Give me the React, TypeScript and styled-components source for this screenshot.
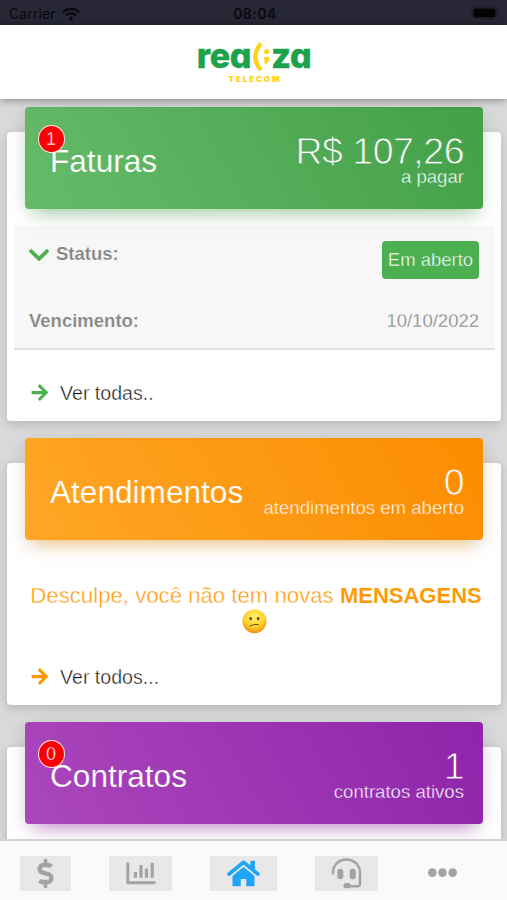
import React from "react";
import styled, { createGlobalStyle } from "styled-components";
import { FaDollarSign, FaHome, FaWifi } from "react-icons/fa";

const GlobalStyle = createGlobalStyle`
  * { box-sizing: border-box; }
  body {
    margin: 0;
    background: #d9d9d9;
    font-family: "Liberation Sans", Arial, sans-serif;
    overflow: hidden;
  }
`;

const Screen = styled.div`
  height: 900px;
  display: flex;
  flex-direction: column;
  overflow: hidden;
  background: #d9d9d9;
`;

const StatusBar = styled.div`
  flex: none;
  height: 25px;
  display: grid;
  grid-template-columns: 1fr auto 1fr;
  align-items: center;
  padding: 3px 6px 0 9px;
  background: #272736;
  color: #090a10;
  font: 400 14px/20px Inter, sans-serif;
`;

const Carrier = styled.div`
  display: flex;
  align-items: center;
  gap: 6px;
  letter-spacing: 0.1px;
`;

const Clock = styled.div`
  font-weight: 600;
  letter-spacing: 0.5px;
`;

const Battery = styled.div`
  justify-self: end;
  display: flex;
  margin-top: -3px;
`;

const Header = styled.header`
  flex: none;
  position: relative;
  z-index: 2;
  height: 74px;
  display: flex;
  flex-direction: column;
  align-items: center;
  background: #fff;
  box-shadow: 0 1px 8px rgba(0, 0, 0, 0.4);
`;

const Wordmark = styled.div`
  display: flex;
  height: 48px;
  padding: 12px 0 0 1px;
  color: #1ba24b;
  font: 800 34px/38px Inter, sans-serif;
  font-feature-settings: "cv11" 1;
  letter-spacing: -0.3px;
  -webkit-text-stroke: 0.4px #1ba24b;
`;

const Tagline = styled.div`
  margin-left: 3px;
  color: #ffd417;
  font: 900 8px/12px Inter, sans-serif;
  letter-spacing: 1.9px;
  -webkit-text-stroke: 0.1px #ffd417;
`;

const Mark = styled.svg`
  flex: none;
  margin: 4px 1px 0 1px;
`;

const Content = styled.main`
  flex: 1;
  min-height: 0;
  overflow: hidden;
  display: flex;
  flex-direction: column;
  gap: 42px;
  padding: 33px 6px 0 7px;
`;

const Card = styled.section<{ $height: number }>`
  flex: none;
  height: ${(p) => p.$height}px;
  display: flex;
  flex-direction: column;
  background: #fff;
  border-radius: 4px;
  box-shadow: 0 3px 10px rgba(0, 0, 0, 0.17);
`;

const Banner = styled.div<{ $from: string; $to: string; $glow: string }>`
  flex: none;
  position: relative;
  display: flex;
  justify-content: space-between;
  height: 102px;
  margin: -25px 18px 0;
  padding: 0 19px 0 25px;
  border-radius: 4px;
  color: #fff;
  background: linear-gradient(60deg, ${(p) => p.$from}, ${(p) => p.$to});
  box-shadow: 0 12px 18px -10px ${(p) => p.$glow}, 0 4px 18px rgba(0, 0, 0, 0.11);
`;

const Title = styled.h2<{ $thin: string }>`
  margin: 36px 0 0;
  font-size: 31.6px;
  line-height: 36px;
  font-weight: 400;
  -webkit-text-stroke: 0.2px ${(p) => p.$thin};
`;

const Figures = styled.div<{ $thin: string }>`
  padding-top: 29px;
  text-align: right;
  -webkit-text-stroke: 0.4px ${(p) => p.$thin};
`;

const Amount = styled.div<{ $thin: string }>`
  font-size: 37.5px;
  line-height: 30px;
  letter-spacing: -0.5px;
  -webkit-text-stroke: 0.9px ${(p) => p.$thin};
`;

const Caption = styled.div`
  font-size: 18.6px;
  line-height: 22px;
`;

const Badge = styled.span`
  position: absolute;
  left: 12.5px;
  top: 18px;
  width: 27px;
  height: 28px;
  border: 1.5px solid #ffe9df;
  border-radius: 50%;
  background: #fb0007;
  font-size: 18px;
  line-height: 27px;
  text-align: center;
  -webkit-text-stroke: 0.4px #fb0007;
`;

const Details = styled.dl`
  flex: none;
  height: 124px;
  margin: 17px 6px 0 7px;
  padding: 15px 16px 0 15px;
  background: #f7f7f7;
  border-bottom: 2px solid #dedede;
  color: #858585;
  font-size: 18.5px;
`;

const DetailRow = styled.div<{ $height: number }>`
  display: flex;
  justify-content: space-between;
  height: ${(p) => p.$height}px;
`;

const Term = styled.dt`
  display: flex;
  align-items: center;
  height: 25px;
  gap: 7px;
  font-weight: 700;
  -webkit-text-stroke: 0.2px #f7f7f7;
`;

const Value = styled.dd`
  margin: 0;
  line-height: 25px;
  -webkit-text-stroke: 0.3px #f7f7f7;
`;

const Pill = styled.dd`
  width: 97px;
  height: 38px;
  margin: 0;
  border-radius: 4px;
  background: #4caf50;
  color: #fff;
  line-height: 37px;
  text-align: center;
  -webkit-text-stroke: 0.4px #4caf50;
`;

const MoreLink = styled.a<{ $gap: number }>`
  display: flex;
  align-items: center;
  gap: 11px;
  margin: ${(p) => p.$gap}px 0 0 24px;
  color: #111;
  font-size: 19.6px;
  line-height: 24px;
  -webkit-text-stroke: 0.4px #fff;
`;

const Message = styled.p`
  display: flex;
  flex-direction: column;
  align-items: center;
  margin: 43px 0 0;
  color: #ff9800;
  font-size: 22.2px;
  line-height: 26px;
  white-space: nowrap;
  -webkit-text-stroke: 0.45px #fff;
`;

const MessageText = styled.span`
  padding-left: 4px;
`;

const Strong = styled.strong`
  font-size: 22px;
  -webkit-text-stroke: 0.1px #fff;
`;

const TabBar = styled.nav`
  flex: none;
  position: relative;
  z-index: 2;
  height: 61px;
  display: flex;
  align-items: flex-start;
  padding: 15px 0 0 20px;
  border-top: 2px solid #d3d3d3;
  background: #fafafa;
`;

const Tab = styled.button<{ $width: number; $gap?: number; $plain?: boolean; $active?: boolean }>`
  flex: none;
  display: flex;
  align-items: center;
  justify-content: center;
  width: ${(p) => p.$width}px;
  height: 35px;
  margin: 0 0 0 ${(p) => p.$gap ?? 0}px;
  padding: 0 0 1px;
  border: 0;
  background: ${(p) => (p.$plain ? "transparent" : "#e8e8e8")};
  color: ${(p) => (p.$active ? "#20a4f8" : "#a3a3a3")};
`;

const Arrow = ({ color }: { color: string }) => (
  <svg width="18" height="18" viewBox="0 0 18 18" fill="none" stroke={color} strokeWidth="3.1">
    <path d="M.6 8.6h15M7.8 1.2l7.5 7.4L7.8 16" />
  </svg>
);

const Chevron = () => (
  <svg width="20" height="14" viewBox="0 0 20 14" fill="none" stroke="#4caf50" strokeWidth="3.8">
    <path d="M.9 3l9.1 8.8L19.1 3" />
  </svg>
);

const ConfusedFace = () => (
  <svg width="25" height="25" viewBox="0 0 25 25">
    <defs>
      <radialGradient id="face" cx=".5" cy=".32" r=".7">
        <stop offset="0" stopColor="#fff06a" />
        <stop offset=".6" stopColor="#fdd02f" />
        <stop offset="1" stopColor="#e98b0b" />
      </radialGradient>
    </defs>
    <circle cx="12.5" cy="12.2" r="12" fill="url(#face)" />
    <ellipse cx="8.7" cy="9.6" rx="1.3" ry="1.6" fill="#6b3c08" />
    <ellipse cx="16.1" cy="9.6" rx="1.3" ry="1.6" fill="#6b3c08" />
    <path d="M7.8 17q3.6-2.2 8.6-1.5" fill="none" stroke="#7b4a0c" strokeWidth="1" strokeLinecap="round" />
  </svg>
);

const BarChart = () => (
  <svg width="30" height="23" viewBox="0 0 30 23" fill="none" stroke="currentColor">
    <path d="M1.8.5v20.2h27.7" strokeWidth="3" strokeLinejoin="round" />
    <path d="M9.4 10v5.8M15 3v12.8M20.5 6.5v9.3M26.2.8v15" strokeWidth="3.2" />
  </svg>
);

const Headset = () => (
  <svg width="31" height="31" viewBox="0 0 31 31">
    <path
      d="M2 16.5V14.5C2 7 8 1.5 15.3 1.5S29 7 29 14.5V26q0 2.3-2.3 2.3H16"
      fill="none"
      stroke="currentColor"
      strokeWidth="2.4"
    />
    <rect x="6.3" y="10.8" width="6" height="10.4" rx="2.6" fill="currentColor" />
    <rect x="18.7" y="10.8" width="6" height="10.4" rx="2.6" fill="currentColor" />
    <rect x="12.4" y="25" width="7.5" height="5.3" rx="2.6" fill="currentColor" />
  </svg>
);

const Dots = () => (
  <svg width="29" height="10" viewBox="0 0 29 10" fill="currentColor">
    <circle cx="4.3" cy="4.6" r="4.3" />
    <circle cx="14.5" cy="4.6" r="4.3" />
    <circle cx="24.7" cy="4.6" r="4.3" />
  </svg>
);

export default function App() {
  return (
    <>
      <GlobalStyle />
      <Screen>
        <StatusBar>
          <Carrier>
            Carrier
            <FaWifi size={18} />
          </Carrier>
          <Clock>08:04</Clock>
          <Battery>
            <svg width="30" height="14" viewBox="0 0 30 14">
              <rect x="1" y="1" width="25" height="11.5" rx="3.5" fill="none" stroke="#1a1a25" />
              <rect x="2.5" y="2.4" width="22" height="8.9" rx="2" fill="#020203" />
              <path d="M28 5v4q1.6-2 0-4z" fill="#1a1a25" />
            </svg>
          </Battery>
        </StatusBar>

        <Header>
          <Wordmark>
            rea
            <Mark width="18" height="32" viewBox="0 0 18 32">
              <path d="M9 2.5Q-2.5 16 9 29" fill="none" stroke="#ffd417" strokeWidth="4.4" />
              <circle cx="14.6" cy="10.5" r="2.6" fill="#ffd417" />
              <path d="M12.2 16h5v2.6q-.6 3.6-4.4 5z" fill="#ffd417" />
            </Mark>
            za
          </Wordmark>
          <Tagline>TELECOM</Tagline>
        </Header>

        <Content>
          <Card $height={289}>
            <Banner $from="#66bb6a" $to="#43a047" $glow="rgba(76,175,80,.5)">
              <Title $thin="#5fb663">Faturas</Title>
              <Figures $thin="#4aa64e">
                <Amount $thin="#4aa64e">R$ 107,26</Amount>
                <Caption>a pagar</Caption>
              </Figures>
              <Badge>1</Badge>
            </Banner>
            <Details>
              <DetailRow $height={67}>
                <Term>
                  <Chevron />
                  Status:
                </Term>
                <Pill>Em aberto</Pill>
              </DetailRow>
              <DetailRow $height={25}>
                <Term>Vencimento:</Term>
                <Value>10/10/2022</Value>
              </DetailRow>
            </Details>
            <MoreLink $gap={31}>
              <Arrow color="#4caf50" />
              Ver todas..
            </MoreLink>
          </Card>

          <Card $height={242}>
            <Banner $from="#ffa726" $to="#fb8c00" $glow="rgba(255,152,0,.5)">
              <Title $thin="#ffa01c">Atendimentos</Title>
              <Figures $thin="#fd9208">
                <Amount $thin="#fd9208">0</Amount>
                <Caption>atendimentos em aberto</Caption>
              </Figures>
            </Banner>
            <Message>
              <MessageText>
                Desculpe, você não tem novas <Strong>MENSAGENS</Strong>
              </MessageText>
              <ConfusedFace />
            </Message>
            <MoreLink $gap={31}>
              <Arrow color="#ff9800" />
              Ver todos...
            </MoreLink>
          </Card>

          <Card $height={200}>
            <Banner $from="#ab47bc" $to="#8e24aa" $glow="rgba(156,39,176,.5)">
              <Title $thin="#a43db7">Contratos</Title>
              <Figures $thin="#9128ac">
                <Amount $thin="#9128ac">1</Amount>
                <Caption>contratos ativos</Caption>
              </Figures>
              <Badge>0</Badge>
            </Banner>
          </Card>
        </Content>

        <TabBar>
          <Tab $width={51} aria-label="Faturas">
            <FaDollarSign size={29} />
          </Tab>
          <Tab $width={63} $gap={38} aria-label="Consumo">
            <BarChart />
          </Tab>
          <Tab $width={67} $gap={38} $active aria-label="Início">
            <FaHome size={33} />
          </Tab>
          <Tab $width={63} $gap={38} aria-label="Atendimento">
            <Headset />
          </Tab>
          <Tab $width={50} $gap={39} $plain aria-label="Mais">
            <Dots />
          </Tab>
        </TabBar>
      </Screen>
    </>
  );
}
